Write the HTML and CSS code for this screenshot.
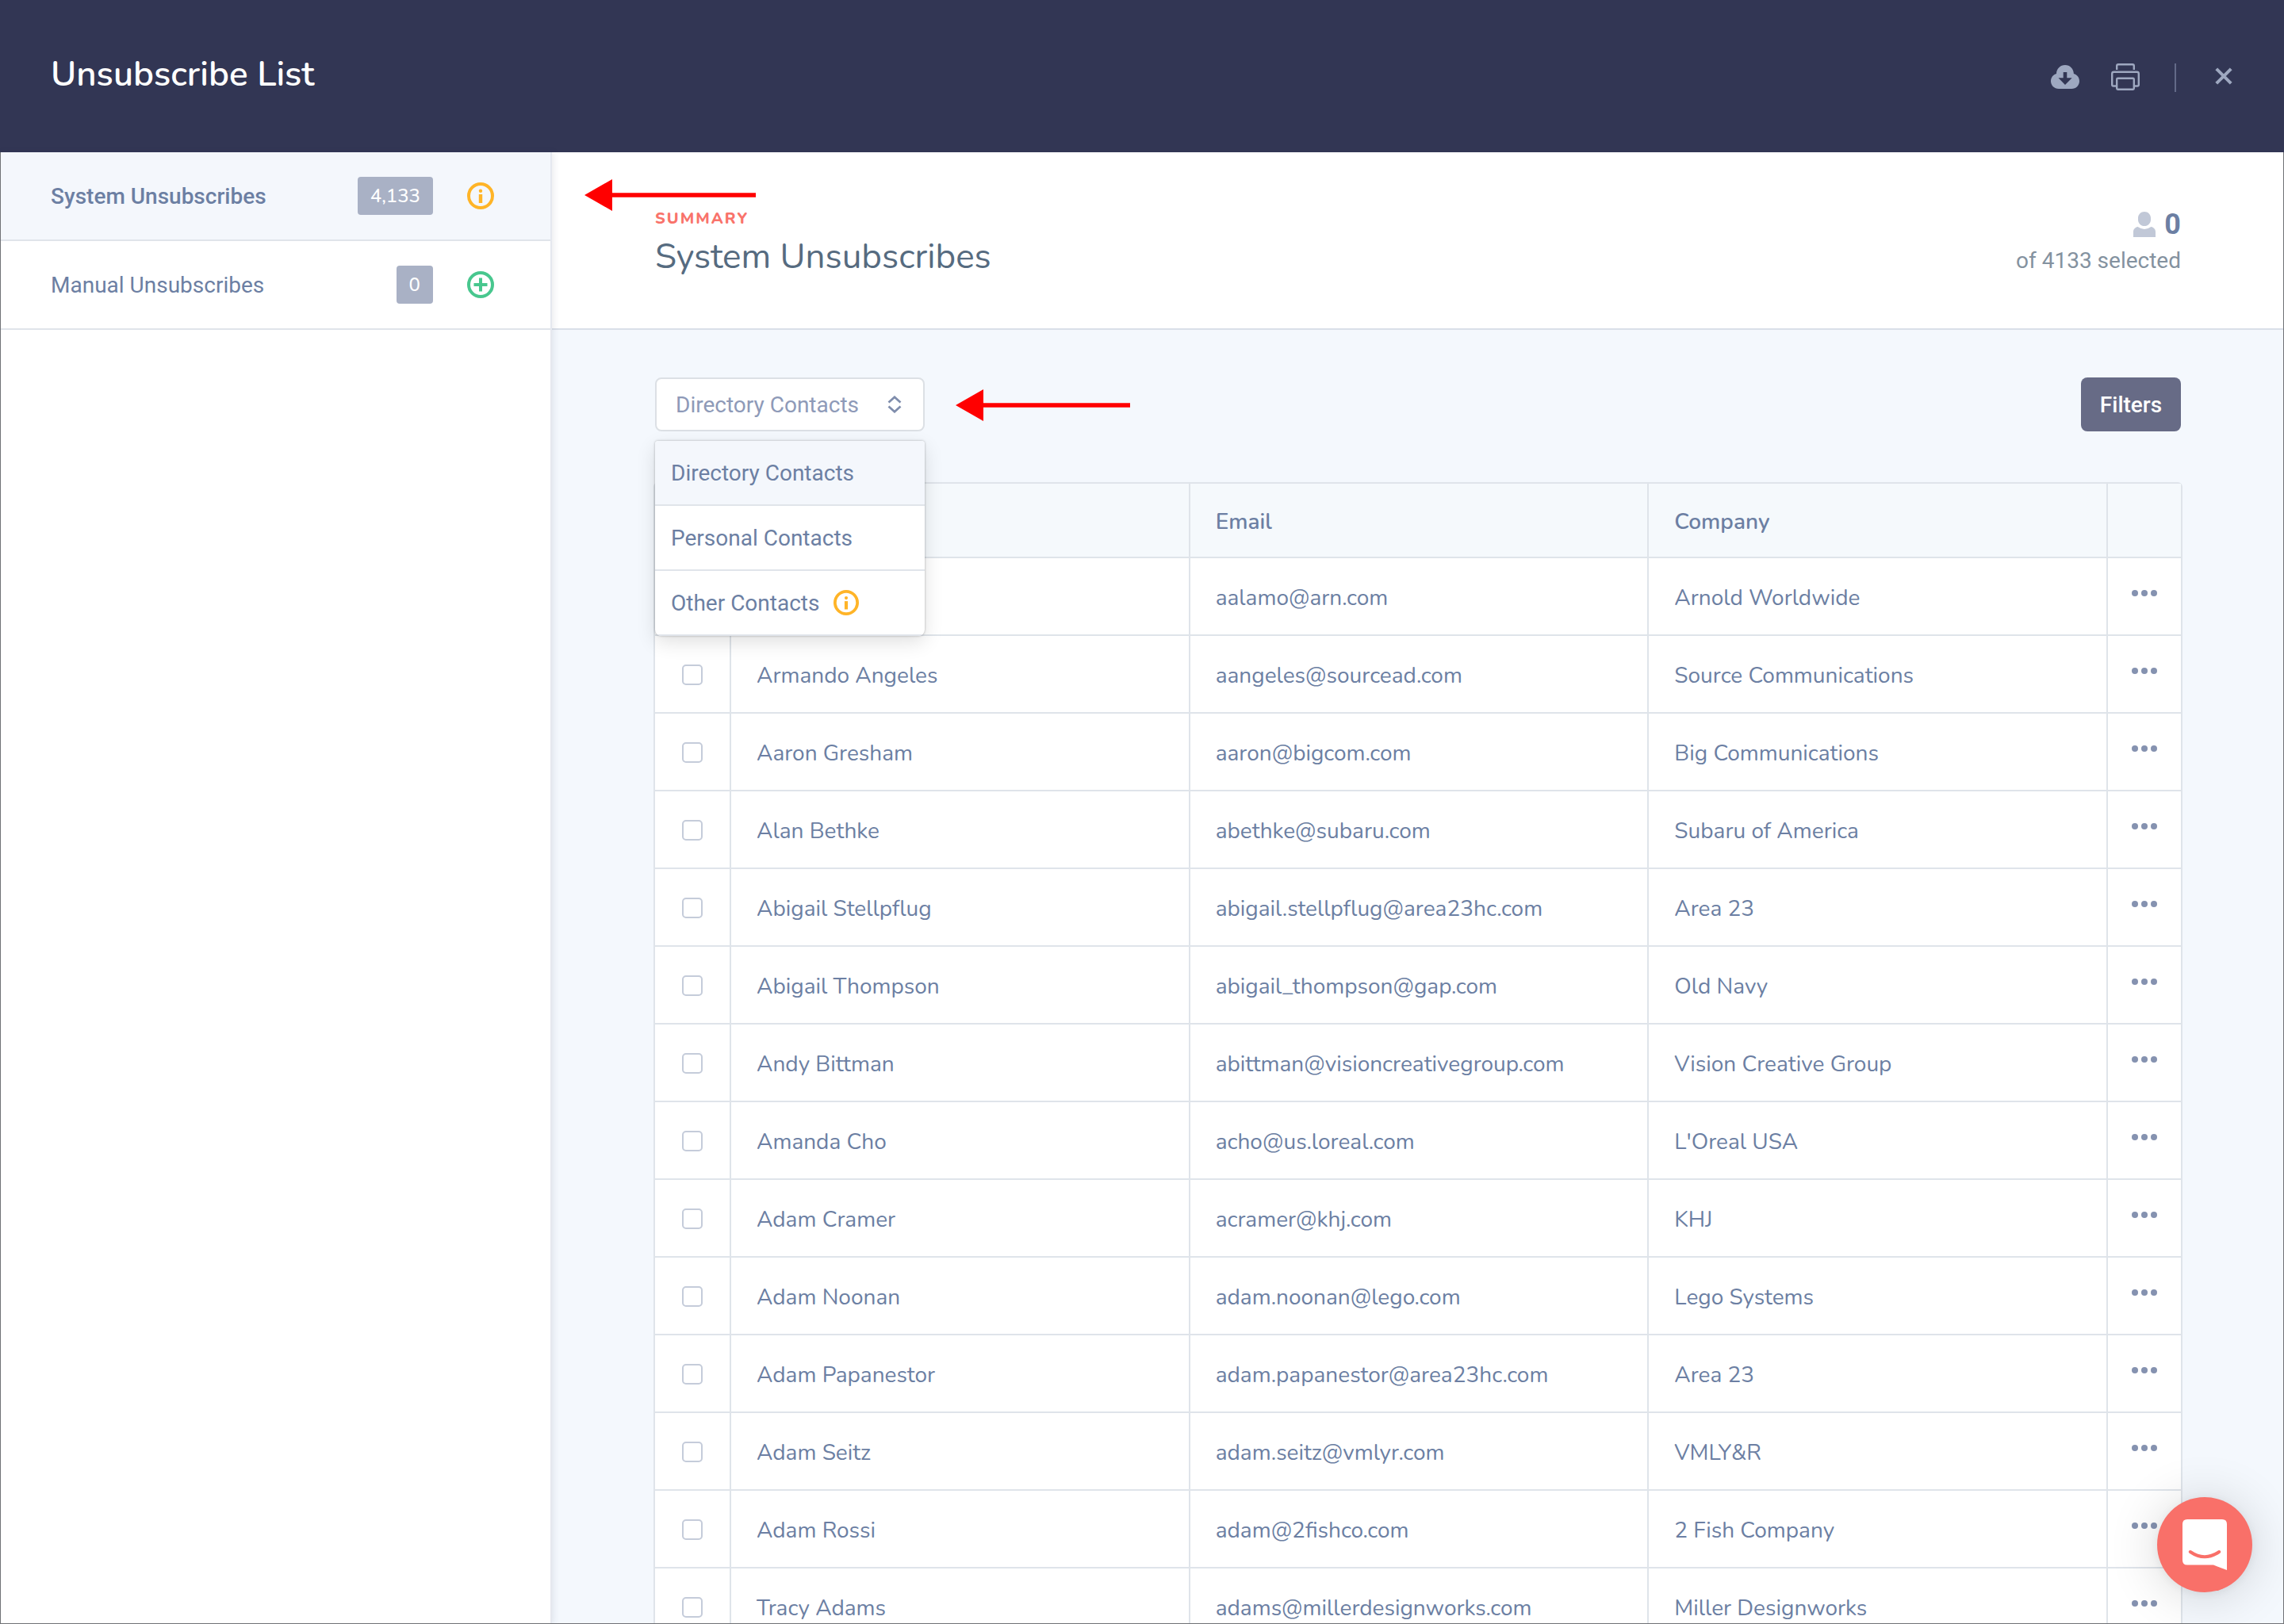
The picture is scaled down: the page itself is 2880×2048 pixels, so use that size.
FILE: index.html
```
<!DOCTYPE html>
<html lang="en">
<head>
<meta charset="utf-8">
<title>Unsubscribe List</title>
<link rel="stylesheet" href="styles.css">
</head>
<body>
<svg class="sprite" aria-hidden="true">
  <symbol id="dots" viewBox="0 0 32 8"><circle cx="4" cy="4" r="4"/><circle cx="16" cy="4" r="4"/><circle cx="28" cy="4" r="4"/></symbol>
  <symbol id="info" viewBox="0 0 34 34"><circle cx="17" cy="17" r="15" fill="none" stroke="currentColor" stroke-width="4"/><circle cx="17" cy="10.7" r="2.2"/><rect x="14.8" y="15" width="4.4" height="11"/></symbol>
</svg>
<div class="page">
  <header class="topbar">
    <h1 class="topbar-title">Unsubscribe List</h1>
    <div class="topbar-actions">
      <svg class="icon-cloud" viewBox="0 0 36 30"><path fill-rule="evenodd" d="M10 30C4.300 30 0 25.700 0 20.300 0 15.800 3 12 7 11 7 4.800 12 0 18 0s10.800 4.800 10.900 11C33 12 36 15.700 36 20.200 36 25.700 31.700 30 26.200 30zM15.700 9v7.300H9.500L18 25l8.700-8.700h-6.400V9z"/></svg>
      <svg class="icon-print" viewBox="0 0 36 34" fill="none" stroke="currentColor" stroke-width="2.400"><path d="M7.200 8V3q0-1.800 1.800-1.800h18q1.800 0 1.800 1.800v5"/><path d="M7 28.500H3q-1.800 0-1.800-1.800V13q0-2.200 2.200-2.200h29.200q2.200 0 2.200 2.200v13.700q0 1.800-1.800 1.800h-4"/><rect x="7.200" y="18.800" width="21.600" height="14" rx="1.200"/></svg>
      <span class="topbar-divider"></span>
      <svg class="icon-close" viewBox="0 0 22 22" fill="none" stroke="currentColor" stroke-width="4"><path d="M1.800 1.800l18.400 18.400M20.200 1.800 1.800 20.200"/></svg>
    </div>
  </header>

  <div class="body">
    <nav class="sidebar">
      <div class="side-item side-item-active">
        <span class="side-label">System Unsubscribes</span>
        <span class="badge">4,133</span>
        <svg class="side-icon info"><use href="#info"/></svg>
      </div>
      <div class="side-item">
        <span class="side-label">Manual Unsubscribes</span>
        <span class="badge">0</span>
        <svg class="side-icon add" viewBox="0 0 34 34" fill="none" stroke="currentColor" stroke-width="4"><circle cx="17" cy="17" r="15"/><path d="M17 8.500v17M8.500 17h17"/></svg>
      </div>
    </nav>

    <main class="main">
      <section class="summary">
        <div>
          <div class="eyebrow">SUMMARY</div>
          <h2 class="summary-title">System Unsubscribes</h2>
        </div>
        <div class="selection">
          <div class="selection-count">
            <svg class="icon-user" viewBox="0 0 28 32"><path d="M14 0c4.500 0 8 3.500 8 7.800v2.400c0 4.300-3.500 7.800-8 7.800s-8-3.500-8-7.800V7.800C6 3.500 9.500 0 14 0zM0 32v-6.500C0 22 2.400 19.600 5.600 19q8.400 6 16.800 0c3.200.600 5.600 3 5.600 6.500V32z"/></svg>
            <b>0</b>
          </div>
          <div class="selection-total">of 4133 selected</div>
        </div>
      </section>

      <section class="content">
        <div class="toolbar">
          <div class="select">
            <span>Directory Contacts</span>
            <svg class="icon-sort" viewBox="0 0 18 22" fill="none" stroke="currentColor" stroke-width="2.800"><path d="M1.500 8.500 9 1.800l7.500 6.700M1.500 13.500 9 20.200l7.500-6.700"/></svg>
            <div class="menu">
              <div class="menu-item menu-item-active">Directory Contacts</div>
              <div class="menu-item">Personal Contacts</div>
              <div class="menu-item">Other Contacts <svg class="menu-icon info"><use href="#info"/></svg></div>
            </div>
          </div>
          <button class="filters">Filters</button>
        </div>

        <div class="table">
          <div class="row head"><div></div><div></div><div>Email</div><div>Company</div><div></div></div>
          <div class="row"><div><i class="check"></i></div><div></div><div>aalamo@arn.com</div><div>Arnold Worldwide</div><div><svg class="more"><use href="#dots"/></svg></div></div>
          <div class="row"><div><i class="check"></i></div><div>Armando Angeles</div><div>aangeles@sourcead.com</div><div>Source Communications</div><div><svg class="more"><use href="#dots"/></svg></div></div>
          <div class="row"><div><i class="check"></i></div><div>Aaron Gresham</div><div>aaron@bigcom.com</div><div>Big Communications</div><div><svg class="more"><use href="#dots"/></svg></div></div>
          <div class="row"><div><i class="check"></i></div><div>Alan Bethke</div><div>abethke@subaru.com</div><div>Subaru of America</div><div><svg class="more"><use href="#dots"/></svg></div></div>
          <div class="row"><div><i class="check"></i></div><div>Abigail Stellpflug</div><div>abigail.stellpflug@area23hc.com</div><div>Area 23</div><div><svg class="more"><use href="#dots"/></svg></div></div>
          <div class="row"><div><i class="check"></i></div><div>Abigail Thompson</div><div>abigail_thompson@gap.com</div><div>Old Navy</div><div><svg class="more"><use href="#dots"/></svg></div></div>
          <div class="row"><div><i class="check"></i></div><div>Andy Bittman</div><div>abittman@visioncreativegroup.com</div><div>Vision Creative Group</div><div><svg class="more"><use href="#dots"/></svg></div></div>
          <div class="row"><div><i class="check"></i></div><div>Amanda Cho</div><div>acho@us.loreal.com</div><div>L'Oreal USA</div><div><svg class="more"><use href="#dots"/></svg></div></div>
          <div class="row"><div><i class="check"></i></div><div>Adam Cramer</div><div>acramer@khj.com</div><div>KHJ</div><div><svg class="more"><use href="#dots"/></svg></div></div>
          <div class="row"><div><i class="check"></i></div><div>Adam Noonan</div><div>adam.noonan@lego.com</div><div>Lego Systems</div><div><svg class="more"><use href="#dots"/></svg></div></div>
          <div class="row"><div><i class="check"></i></div><div>Adam Papanestor</div><div>adam.papanestor@area23hc.com</div><div>Area 23</div><div><svg class="more"><use href="#dots"/></svg></div></div>
          <div class="row"><div><i class="check"></i></div><div>Adam Seitz</div><div>adam.seitz@vmlyr.com</div><div>VMLY&amp;R</div><div><svg class="more"><use href="#dots"/></svg></div></div>
          <div class="row"><div><i class="check"></i></div><div>Adam Rossi</div><div>adam@2fishco.com</div><div>2 Fish Company</div><div><svg class="more"><use href="#dots"/></svg></div></div>
          <div class="row"><div><i class="check"></i></div><div>Tracy Adams</div><div>adams@millerdesignworks.com</div><div>Miller Designworks</div><div><svg class="more"><use href="#dots"/></svg></div></div>
        </div>
      </section>
    </main>
  </div>

  <svg class="arrow arrow-sidebar" viewBox="0 0 216 40"><path d="M0 20 35 0v40zM35 17.200h181v5.600H35z"/></svg>
  <svg class="arrow arrow-select" viewBox="0 0 220 40"><path d="M0 20 35 0v40zM35 17.200h185v5.600H35z"/></svg>

  <div class="chat">
    <svg viewBox="0 0 120 120"><path fill="#fff" d="M38 28h44q6 0 6 6v58l-17-6.500H38q-6 0-6-6V34q0-6 6-6z"/><path d="M41.800 69Q60 81.500 78.200 69" fill="none" stroke="#f97069" stroke-width="4" stroke-linecap="round"/></svg>
  </div>
</div>
</body>
</html>
```
FILE: styles.css
```
* { box-sizing: border-box; }

body {
  margin: 0;
  overflow: hidden;
  font-family: Nunito, Lato, "Open Sans", sans-serif;
  font-size: 28px;
  color: #6c7fa3;
}

h1, h2 { margin: 0; font-weight: 400; }
svg { display: block; flex: none; }
.sprite { position: absolute; width: 0; height: 0; }

.page {
  position: relative;
  display: flex;
  flex-direction: column;
  width: 2880px;
  height: 2048px;
  overflow: hidden;
  background: #fff;
}
/* hairline frame below the top bar */
.page::after {
  content: "";
  position: absolute;
  z-index: 4;
  inset: 192px 0 0;
  border: 1px solid #707276;
  border-top: 0;
  pointer-events: none;
}

/* top bar */
.topbar {
  display: flex;
  justify-content: space-between;
  flex: none;
  height: 192px;
  padding: 61px 65px 0 64px;
  background: #323654;
  color: #9ea8c0;
}
.topbar-title {
  padding-top: 3px;
  font-size: 44px;
  font-weight: 600;
  line-height: 60px;
  color: #fff;
}
.topbar-actions { display: flex; align-items: center; height: 72px; }
.icon-cloud { width: 36px; height: 30px; fill: currentColor; }
.icon-print { width: 36px; height: 34px; margin: 0 44px 0 40px; }
.topbar-divider { width: 2px; height: 36px; margin: 2px 49px 0 0; background: #636a88; }
.icon-close { width: 22px; height: 22px; margin-bottom: 2px; }

/* sidebar */
.body { display: flex; flex: 1; min-height: 0; }
.sidebar {
  position: relative;
  z-index: 1;
  flex: none;
  width: 696px;
  background: #fff;
  border-right: 2px solid #e5e8ef;
  box-shadow: 2px 0 8px rgba(50, 60, 90, .1);
}
.side-item {
  display: flex;
  align-items: center;
  height: 112px;
  padding: 0 71px 0 64px;
  border-bottom: 2px solid #e0e4ea;
  font-family: Roboto, sans-serif;
}
.side-item-active { background: #f4f7fc; font-weight: 500; }
.side-label { flex: 1; }
.badge {
  height: 48px;
  padding: 0 16px;
  border-radius: 4px;
  background: #a9b1c5;
  color: #fff;
  font: 500 24px/48px Nunito, Lato, sans-serif;
}
.side-icon { width: 34px; height: 34px; margin-left: 43px; }
.info { color: #ffb427; fill: currentColor; }
.add { color: #48c78e; }

/* summary strip */
.main { display: flex; flex-direction: column; flex: 1; min-width: 0; }
.summary {
  display: flex;
  justify-content: space-between;
  flex: none;
  height: 224px;
  padding: 67px 130px 0;
  border-bottom: 2px solid #d9dfe8;
}
.eyebrow {
  padding-top: 2px;
  font-size: 20px;
  font-weight: 800;
  line-height: 30px;
  letter-spacing: 2px;
  color: #f9736b;
}
.summary-title {
  margin-top: 3px;
  font-size: 44px;
  line-height: 60px;
  color: #566b80;
}
.selection { padding-top: 4px; font-family: Roboto, sans-serif; text-align: right; }
.selection-count {
  display: flex;
  align-items: center;
  justify-content: flex-end;
  gap: 11px;
  height: 40px;
  font-size: 36px;
}
.icon-user { width: 28px; height: 32px; fill: #c1c8d7; }
.selection-total { margin-top: 6px; line-height: 40px; color: #84929f; }

/* toolbar */
.content { flex: 1; min-height: 0; padding: 60px 130px 0; background: #f4f8fd; }
.toolbar {
  display: flex;
  justify-content: space-between;
  height: 68px;
  font-family: Roboto, sans-serif;
}
.select {
  position: relative;
  display: flex;
  align-items: center;
  justify-content: space-between;
  width: 340px;
  padding: 0 27px 0 24px;
  border: 2px solid #dce0e5;
  border-radius: 8px;
  background: #fff;
  color: #8e9ab8;
}
.icon-sort { width: 18px; height: 22px; color: #7f8dac; }
.menu {
  position: absolute;
  z-index: 2;
  top: 78px;
  left: -2px;
  width: 340px;
  border-radius: 4px 4px 8px 8px;
  background: #fff;
  color: #6c7fa3;
  box-shadow: 0 0 3px rgba(0, 0, 0, .3), 0 8px 24px rgba(0, 0, 0, .12);
  overflow: hidden;
}
.menu-item {
  display: flex;
  align-items: center;
  gap: 18px;
  height: 82px;
  padding-left: 20px;
  border-bottom: 2px solid #e0e4ea;
}
.menu-item-active { background: #f4f7fc; }
.menu-icon { width: 32px; height: 32px; }
.filters {
  width: 126px;
  padding: 0;
  border: 0;
  border-radius: 8px;
  background: #676b86;
  color: #fff;
  font: 500 28px Roboto, sans-serif;
}

/* contacts table */
.table {
  margin: 64px -2px 0;
  border: 2px solid #dfe4ea;
  border-radius: 6px 6px 0 0;
  background: #fff;
}
.row {
  display: grid;
  grid-template-columns: 94px repeat(3, 1fr) 94px;
  height: 98px;
  border-bottom: 2px solid #dfe4ea;
}
.row > div {
  display: flex;
  align-items: center;
  padding: 3px 0 0 32px;
  border-left: 2px solid #dfe4ea;
  white-space: nowrap;
}
.row > div:first-child { padding: 2px 0 0 34px; border-left: 0; }
.row > div:last-child { padding: 0 0 8px 30px; }
.head { height: 94px; background: #f5f9fc; font-weight: 600; }
.check {
  width: 26px;
  height: 26px;
  border: 2px solid #c5ccda;
  border-radius: 5px;
}
.more { width: 32px; height: 8px; fill: #8592b0; }

/* callout arrows */
.arrow { position: absolute; z-index: 3; height: 40px; fill: #f00; }
.arrow-sidebar { top: 226px; left: 737px; width: 216px; }
.arrow-select { top: 491px; left: 1205px; width: 220px; }

/* chat launcher */
.chat {
  position: absolute;
  top: 1888px;
  left: 2720px;
  width: 120px;
  height: 120px;
  border-radius: 50%;
  background: #f97069;
  box-shadow: 0 2px 12px rgba(0, 0, 0, .06), 0 4px 64px rgba(0, 0, 0, .16);
}
```
